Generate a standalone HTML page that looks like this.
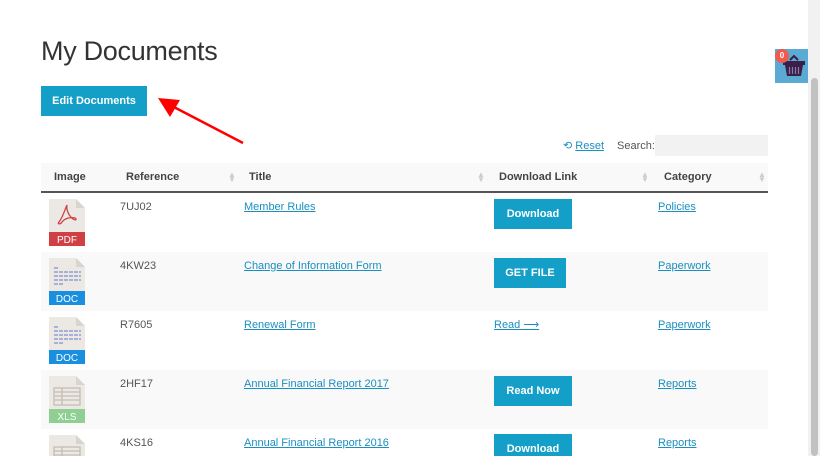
<!DOCTYPE html>
<html style="width:820px;height:456px;overflow:hidden"><head><meta charset="utf-8"><style>
*{margin:0;padding:0;box-sizing:border-box}
body{width:820px;height:456px;overflow:hidden;background:#fff;font-family:"Liberation Sans",sans-serif;color:#555;position:relative;font-size:11px}
.a{position:absolute}
h1{position:absolute;left:41px;top:36px;font-weight:normal;font-size:27px;color:#333;letter-spacing:-0.3px}
.btn{position:absolute;background:#139fc7;color:#fff;font-weight:bold;font-size:11px;display:flex;align-items:center;justify-content:center}
a{color:#1a8fc0;text-decoration:underline}
.row{position:absolute;left:41px;width:727px;height:59px;overflow:hidden}
.hdr{position:absolute;left:41px;top:163px;width:727px;height:30px;background:#f9f9f9;border-bottom:2px solid #555}
.hdr span{position:absolute;top:8px;font-weight:bold;color:#444;font-size:11px}
.sort{position:absolute;top:9px;color:#ccc;font-size:8px;line-height:5px}
.ref{position:absolute;left:79px;top:8px;color:#555}
.tt{position:absolute;left:203px;top:8px}
.cat{position:absolute;left:617px;top:8px}
</style></head><body>
<h1>My Documents</h1>
<div class="btn" style="left:41px;top:86px;width:106px;height:30px">Edit Documents</div>
<svg class="a" style="left:0;top:0" width="260" height="150"><line x1="243" y1="143" x2="170" y2="105" stroke="red" stroke-width="2.5"/><polygon points="158,98 180,100 170,117" fill="red"/></svg>
<div class="a" style="left:563px;top:139px;color:#1a8fc0">⟲ <a>Reset</a></div>
<div class="a" style="left:617px;top:140px;color:#555">Search:</div>
<div class="a" style="left:655px;top:135px;width:113px;height:21px;background:#f2f2f2"></div>
<div class="a" style="left:775px;top:49px;width:34px;height:34px;background:#5aaad4"></div>
<svg class="a" style="left:781px;top:55px" width="26" height="24"><path d="M9 5 L13 1 L17 5" stroke="#3a1f4a" stroke-width="2" fill="none"/><rect x="2" y="6" width="22" height="4" fill="#3a1f4a"/><path d="M4 10 H22 L20 21 H6Z" fill="#3a1f4a"/><path d="M8.5 12v7M11.5 12v7M14.5 12v7M17.5 12v7" stroke="#8a7aa0" stroke-width="1.2"/></svg>
<div class="a" style="left:775px;top:49px;width:14px;height:14px;border-radius:7px;background:#f05b4e;color:#fff;font-size:8px;font-weight:bold;text-align:center;line-height:14px">0</div>
<div class="a" style="left:808px;top:0;width:12px;height:456px;background:#f1f1f1"></div>
<div class="a" style="left:811px;top:78px;width:7px;height:378px;border-radius:4px;background:#c1c1c1"></div>

<div class="hdr">
<span style="left:13px">Image</span>
<span style="left:85px">Reference</span><div class="sort" style="left:187px">▲<br>▼</div>
<span style="left:208px">Title</span><div class="sort" style="left:436px">▲<br>▼</div>
<span style="left:458px">Download Link</span><div class="sort" style="left:600px">▲<br>▼</div>
<span style="left:623px">Category</span><div class="sort" style="left:717px">▲<br>▼</div>
</div>

<div class="row" style="top:193px;background:#fff">
<svg class="a" style="left:8px;top:6px" width="36" height="47"><path d="M0 0H27L36 9V47H0Z" fill="#ece9e4"/><path d="M27 0V9H36" fill="#d8d4ce"/><rect y="33" width="36" height="14" fill="#cf3f44"/><path d="M18 6C16 10 14 18 10 23C8 25 11 26 13 23C16 19 22 18 26 19C28 20 27 22 24 20C20 17 17 11 18 6Z" stroke="#cf3f44" stroke-width="1.3" fill="none"/><text x="18" y="44" font-size="10" fill="#fff" text-anchor="middle" font-family="Liberation Sans">PDF</text></svg>
<div class="ref">7UJ02</div><a class="tt">Member Rules</a>
<div class="btn" style="left:453px;top:6px;width:78px;height:30px">Download</div>
<a class="cat">Policies</a></div>

<div class="row" style="top:252px;background:#f9f9f9">
<svg class="a" style="left:8px;top:6px" width="36" height="47"><path d="M0 0H27L36 9V47H0Z" fill="#ece9e4"/><path d="M27 0V9H36" fill="#d8d4ce"/><g stroke="#7d8fd0" stroke-width="1.3" stroke-dasharray="4 1"><path d="M5 10h4M5 14h27M5 18h27M5 22h27M5 26h10"/></g><rect y="33" width="36" height="14" fill="#1a8fe0"/><text x="18" y="44" font-size="10" fill="#fff" text-anchor="middle" font-family="Liberation Sans">DOC</text></svg>
<div class="ref">4KW23</div><a class="tt">Change of Information Form</a>
<div class="btn" style="left:453px;top:6px;width:72px;height:30px">GET FILE</div>
<a class="cat">Paperwork</a></div>

<div class="row" style="top:311px;background:#fff">
<svg class="a" style="left:8px;top:6px" width="36" height="47"><path d="M0 0H27L36 9V47H0Z" fill="#ece9e4"/><path d="M27 0V9H36" fill="#d8d4ce"/><g stroke="#7d8fd0" stroke-width="1.3" stroke-dasharray="4 1"><path d="M5 10h4M5 14h27M5 18h27M5 22h27M5 26h10"/></g><rect y="33" width="36" height="14" fill="#1a8fe0"/><text x="18" y="44" font-size="10" fill="#fff" text-anchor="middle" font-family="Liberation Sans">DOC</text></svg>
<div class="ref">R7605</div><a class="tt">Renewal Form</a>
<a class="a" style="left:453px;top:7px">Read ⟶</a>
<a class="cat">Paperwork</a></div>

<div class="row" style="top:370px;background:#f9f9f9">
<svg class="a" style="left:8px;top:6px" width="36" height="47"><path d="M0 0H27L36 9V47H0Z" fill="#ece9e4"/><path d="M27 0V9H36" fill="#d8d4ce"/><g stroke="#c4bdb4" stroke-width="1.3" fill="none"><rect x="5" y="12" width="26" height="17"/><path d="M5 16h26M5 20h26M5 24h26M13 12v17"/></g><rect y="33" width="36" height="14" fill="#8fcf94"/><text x="18" y="44" font-size="10" fill="#fff" text-anchor="middle" font-family="Liberation Sans">XLS</text></svg>
<div class="ref">2HF17</div><a class="tt">Annual Financial Report 2017</a>
<div class="btn" style="left:453px;top:6px;width:78px;height:30px">Read Now</div>
<a class="cat">Reports</a></div>

<div class="row" style="top:429px;background:#fff;height:27px">
<svg class="a" style="left:8px;top:6px" width="36" height="47"><path d="M0 0H27L36 9V47H0Z" fill="#ece9e4"/><path d="M27 0V9H36" fill="#d8d4ce"/><g stroke="#c4bdb4" stroke-width="1.3" fill="none"><rect x="5" y="12" width="26" height="17"/><path d="M5 16h26M5 20h26M5 24h26M13 12v17"/></g></svg>
<div class="ref">4KS16</div><a class="tt">Annual Financial Report 2016</a>
<div class="btn" style="left:453px;top:5px;width:78px;height:30px">Download</div>
<a class="cat">Reports</a></div>
</body></html>
